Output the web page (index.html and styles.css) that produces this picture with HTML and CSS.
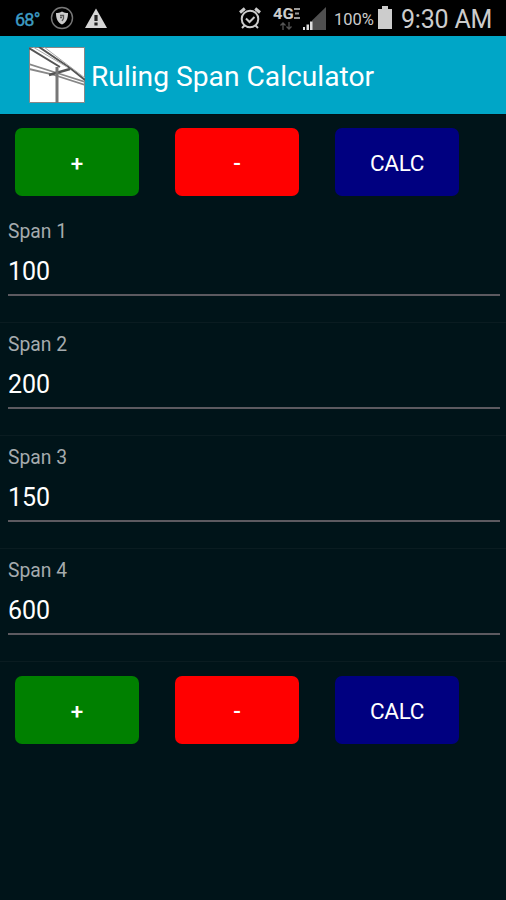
FILE: index.html
```html
<!DOCTYPE html>
<html lang="en">
<head>
  <meta charset="UTF-8" />
  <meta name="viewport" content="width=device-width, initial-scale=1" />
  <title>Ruling Span Calculator</title>
  <link rel="stylesheet" href="styles.css">
</head>
<body>

  <div class="status-bar">
    <span class="temp">68°</span>
    <svg class="shield" width="24" height="24" viewBox="0 0 24 24">
      <circle cx="12" cy="12" r="10.5" fill="none" stroke="#777" stroke-width="1.4" />
      <path d="M12 5.500c2 1.200 4 1.500 6 1.500 0 6-1.800 9.500-6 11.500-4.200-2-6-5.500-6-11.500 2 0 4-.3 6-1.500z" fill="#ccc" />
      <path d="M10 9.500h3.500v3L12 15M10 11.500h2" fill="none" stroke="#555" stroke-width="1.3" />
    </svg>
    <svg class="warning" width="24" height="22" viewBox="0 0 24 22">
      <path d="M12 1.500L23 21H1z" fill="#d6d6d6" />
      <path d="M10.400 8h3.200v6h-3.200zM10.400 15.500h3.200v3h-3.200z" fill="#222" />
    </svg>
    <svg class="alarm" width="24" height="24" viewBox="0 0 24 24" fill="none" stroke="#ccc">
      <circle cx="12" cy="13" r="8.300" stroke-width="2" />
      <path d="M8 12.500l3.500 3.500 5-5M6.500 19.500L4 22M17.500 19.500L20 22" stroke-width="2" />
      <path d="M2 6.500L6.800 2.500M17.200 2.500L22 6.500" stroke-width="3" />
    </svg>
    <div class="network">
      <span class="lte"><span>4G</span><svg width="6" height="11" viewBox="0 0 6 11"><path d="M0 1h6M1 5.500h4M0 10h6" stroke="#999" stroke-width="2" /></svg></span>
      <svg class="arrows" width="12" height="8" viewBox="0 0 12 8"><path d="M3 8V2M.5 3.500L3 1l2.500 2.500M9 0v6M6.500 4.500L9 7l2.500-2.500" fill="none" stroke="#555" stroke-width="1.300" /></svg>
    </div>
    <svg class="signal" width="24" height="23" viewBox="0 0 24 23">
      <path d="M10 13.500L24 0v23H10z" fill="#505050" />
      <path d="M1 20h2v3H1zM4.500 17.500h2.500V23H4.500zM8 14.500h2.500V23H8z" fill="#ddd" />
    </svg>
    <span class="percent">100%</span>
    <svg class="battery" width="16" height="23" viewBox="0 0 16 23">
      <path d="M5 0h6v3h4v20H1V3h4z" fill="#ccc" />
    </svg>
    <span class="time">9:30 AM</span>
  </div>

  <header>
    <svg class="logo" width="56" height="56" viewBox="0 0 56 56">
      <path d="M.5.5h55v55H.5z" fill="#fff" stroke="#888" />
      <g fill="none" stroke="#555">
        <path d="M0 1l31 19M10 0l31 21 15 12" stroke-width="2" />
        <path d="M4 0l34 20M15 0l41 31" stroke="#aaa" />
        <path d="M0 17l28 9 28 9M0 22l22 5 34 11" stroke="#888" stroke-width="1.800" />
        <path d="M20 28l21-6" stroke-width="2.500" />
        <path d="M28 20v36" stroke="#777" stroke-width="3" />
      </g>
    </svg>
    <h1>Ruling Span Calculator</h1>
  </header>

  <form id="spanForm">
    <div class="buttons">
      <button type="button" class="add">+</button>
      <button type="button" class="remove">-</button>
      <button type="button" class="calc">CALC</button>
    </div>

    <div class="spans">
      <div class="span-row">
        <label for="span1">Span 1</label>
        <input type="text" id="span1" value="100" />
      </div>
      <div class="span-row">
        <label for="span2">Span 2</label>
        <input type="text" id="span2" value="200" />
      </div>
      <div class="span-row">
        <label for="span3">Span 3</label>
        <input type="text" id="span3" value="150" />
      </div>
      <div class="span-row">
        <label for="span4">Span 4</label>
        <input type="text" id="span4" value="600" />
      </div>
    </div>

    <div class="buttons">
      <button type="button" class="add">+</button>
      <button type="button" class="remove">-</button>
      <button type="button" class="calc">CALC</button>
    </div>
  </form>

</body>
</html>
```

FILE: styles.css
```css
* {
  box-sizing: border-box;
}
body {
  margin: 0;
  height: 900px;
  overflow: hidden;
  font-family: Roboto, sans-serif;
  color: white;
  background-color: #001419;
}
.status-bar {
  display: flex;
  align-items: center;
  height: 36px;
  padding-left: 15px;
  background-color: #000;
  color: #ccc;
  white-space: nowrap;
}
.status-bar svg {
  flex: none;
}
.temp {
  width: 35px;
  padding-top: 2px;
  font-size: 18px;
  letter-spacing: -0.8px;
  color: #3d9cc4;
  -webkit-text-stroke: 0.4px #3d9cc4;
}
.warning {
  margin-left: 10px;
}
.alarm {
  margin-left: 130px;
}
.network {
  display: flex;
  flex-direction: column;
  align-items: center;
  width: 28px;
  margin-left: 10px;
}
.lte {
  display: flex;
  align-items: center;
  height: 15px;
}
.lte span {
  width: 21px;
  font-size: 15px;
  font-weight: bold;
  transform: scaleX(1.1);
  transform-origin: left;
}
.arrows {
  margin-top: 1px;
}
.signal {
  margin-left: 2px;
}
.percent {
  width: 43px;
  margin-left: 8px;
  padding-top: 2px;
  font-size: 16.5px;
}
.battery {
  margin-top: -2px;
}
.time {
  margin-left: 8px;
  padding-top: 3px;
  font-size: 25px;
  letter-spacing: -0.2px;
}
header {
  display: flex;
  align-items: center;
  height: 79px;
  padding-left: 29px;
  background-color: #00a6c7;
  border-bottom: 1px solid #001015;
}
h1 {
  margin: 0 0 0 6px;
  padding-top: 2px;
  font-size: 28.2px;
  font-weight: normal;
}
.buttons {
  display: flex;
  gap: 36px;
  padding: 13px 14px 14px 15px;
}
.spans + .buttons {
  padding-top: 14px;
}
button {
  width: 124px;
  height: 68px;
  padding: 1px 0 0;
  font-family: inherit;
  font-size: 22.5px;
  border: none;
  border-radius: 7px;
  color: white;
}
.add,
.remove {
  font-weight: 500;
}
.add {
  background-color: #008000;
}
.remove {
  background-color: #ff0000;
}
.calc {
  background-color: #000080;
  letter-spacing: -0.3px;
}
.span-row {
  display: flex;
  flex-direction: column;
  height: 113px;
  padding: 9px 6px 0 8px;
  border-bottom: 1px solid #0a1c21;
}
label {
  height: 24px;
  line-height: 25px;
  font-size: 19.3px;
  color: #a5abae;
}
input {
  width: 100%;
  height: 53px;
  padding: 6px 0 0;
  font-family: inherit;
  font-size: 25px;
  color: white;
  background: none;
  border: none;
  border-bottom: 2px solid #5c5a60;
  outline: none;
}
```
